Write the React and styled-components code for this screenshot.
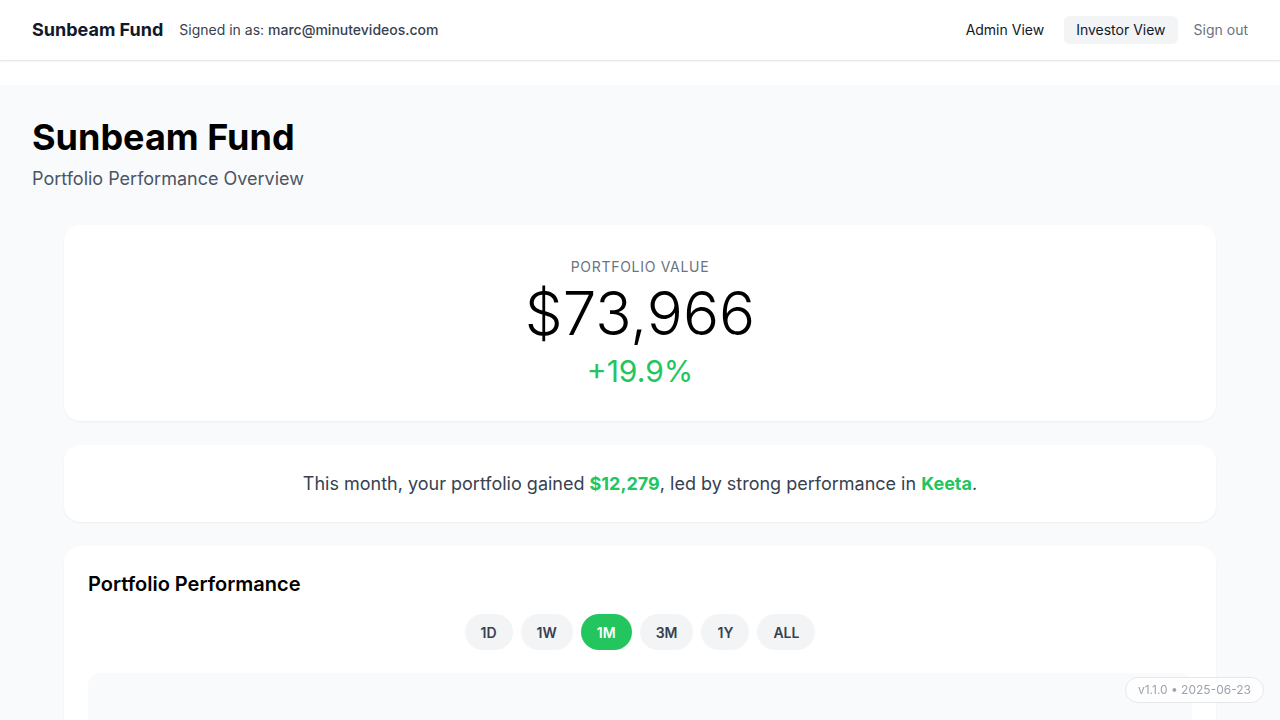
import React from "react";
import styled, { createGlobalStyle } from "styled-components";

const Global = createGlobalStyle`
  * { box-sizing: border-box; }
  html, body { margin: 0; padding: 0; background: #ffffff; }
  body { font-family: Inter, "Noto Sans", "Liberation Sans", sans-serif; color: #111827; -webkit-font-smoothing: antialiased; }
`;

const Header = styled.header`
  height: 61px;
  display: flex;
  align-items: center;
  justify-content: space-between;
  padding: 0 32px 2px;
  background: #fff;
  border-bottom: 1px solid #e5e7eb;
  box-shadow: 0 1px 2px rgba(0,0,0,0.04);
`;

const Brand = styled.div`
  display: flex;
  align-items: center;
  gap: 16px;
`;

const Logo = styled.span`
  font-size: 18px;
  font-weight: 700;
  color: #111827;
`;

const Signed = styled.span`
  font-size: 14px;
  color: #374151;
  b { font-weight: 500; }
`;

const Nav = styled.nav`
  display: flex;
  align-items: center;
  gap: 8px;
  margin-top: 2px;
`;

const NavButton = styled.button`
  border: 0;
  font: inherit;
  font-size: 14px;
  line-height: 20px;
  padding: 4px 12px;
  border-radius: 6px;
  color: #111827;
  background: ${p => (p.$active ? "#f3f4f6" : "transparent")};
  cursor: pointer;
`;

const SignOut = styled.button`
  border: 0;
  background: none;
  font: inherit;
  font-size: 14px;
  line-height: 20px;
  color: #6b7280;
  padding: 0;
  margin-left: 8px;
`;

const Main = styled.main`
  margin-top: 24px;
  background: #f9fafb;
  padding: 32px 32px 48px;
  min-height: 700px;
`;

const Title = styled.h1`
  margin: 0;
  font-size: 36px;
  line-height: 40px;
  font-weight: 700;
  color: #000;
`;

const Subtitle = styled.p`
  margin: 8px 0 0;
  font-size: 18px;
  line-height: 28px;
  color: #4b5563;
`;

const Stack = styled.div`
  max-width: 1152px;
  margin: 32px auto 0;
  display: flex;
  flex-direction: column;
  gap: 24px;
`;

const Card = styled.section`
  background: #fff;
  border-radius: 16px;
  box-shadow: 0 1px 2px rgba(0,0,0,0.05);
  padding: ${p => p.$pad || "24px"};
  text-align: ${p => p.$align || "left"};
`;

const Label = styled.div`
  font-size: 14px;
  line-height: 20px;
  letter-spacing: 0.05em;
  text-transform: uppercase;
  color: #6b7280;
`;

const Value = styled.div`
  margin-top: 4px;
  font-size: 60px;
  line-height: 64px;
  font-weight: 300;
  color: #000;
`;

const Change = styled.div`
  margin-top: 8px;
  font-size: 30px;
  line-height: 36px;
  color: #22c55e;
`;

const Summary = styled.p`
  margin: 0;
  font-size: 18px;
  line-height: 29px;
  color: #374151;
`;

const Highlight = styled.strong`
  color: #22c55e;
  font-weight: 700;
`;

const CardTitle = styled.h2`
  margin: 0;
  font-size: 20px;
  line-height: 28px;
  font-weight: 600;
  color: #000;
`;

const Ranges = styled.div`
  margin-top: 16px;
  display: flex;
  justify-content: center;
  gap: 8px;
`;

const RangeButton = styled.button`
  border: 0;
  font: inherit;
  height: 36px;
  padding: 0 16px;
  border-radius: 9999px;
  font-size: 14px;
  font-weight: 600;
  background: ${p => (p.$active ? "#22c55e" : "#f3f4f6")};
  color: ${p => (p.$active ? "#fff" : "#374151")};
`;

const Chart = styled.div`
  margin-top: 23px;
  height: 320px;
  border-radius: 12px;
  background: #f9fafb;
`;

const Version = styled.div`
  position: fixed;
  right: 16px;
  bottom: 17px;
  padding: 4px 12px;
  font-size: 12px;
  line-height: 16px;
  color: #9ca3af;
  background: rgba(255,255,255,0.8);
  border: 1px solid #e5e7eb;
  border-radius: 9999px;
`;

const ranges = ["1D", "1W", "1M", "3M", "1Y", "ALL"];

export default function App() {
  return (
    <>
      <Global />
      <Header>
        <Brand>
          <Logo>Sunbeam Fund</Logo>
          <Signed>Signed in as: <b>marc@minutevideos.com</b></Signed>
        </Brand>
        <Nav>
          <NavButton>Admin View</NavButton>
          <NavButton $active>Investor View</NavButton>
          <SignOut>Sign out</SignOut>
        </Nav>
      </Header>
      <Main>
        <Title>Sunbeam Fund</Title>
        <Subtitle>Portfolio Performance Overview</Subtitle>
        <Stack>
          <Card $pad="32px" $align="center">
            <Label>Portfolio Value</Label>
            <Value>$73,966</Value>
            <Change>+19.9%</Change>
          </Card>
          <Card $align="center">
            <Summary>
              This month, your portfolio gained <Highlight>$12,279</Highlight>, led by strong performance in <Highlight>Keeta</Highlight>.
            </Summary>
          </Card>
          <Card>
            <CardTitle>Portfolio Performance</CardTitle>
            <Ranges>
              {ranges.map(r => (
                <RangeButton key={r} $active={r === "1M"}>{r}</RangeButton>
              ))}
            </Ranges>
            <Chart />
          </Card>
        </Stack>
      </Main>
      <Version>v1.1.0 • 2025-06-23</Version>
    </>
  );
}
